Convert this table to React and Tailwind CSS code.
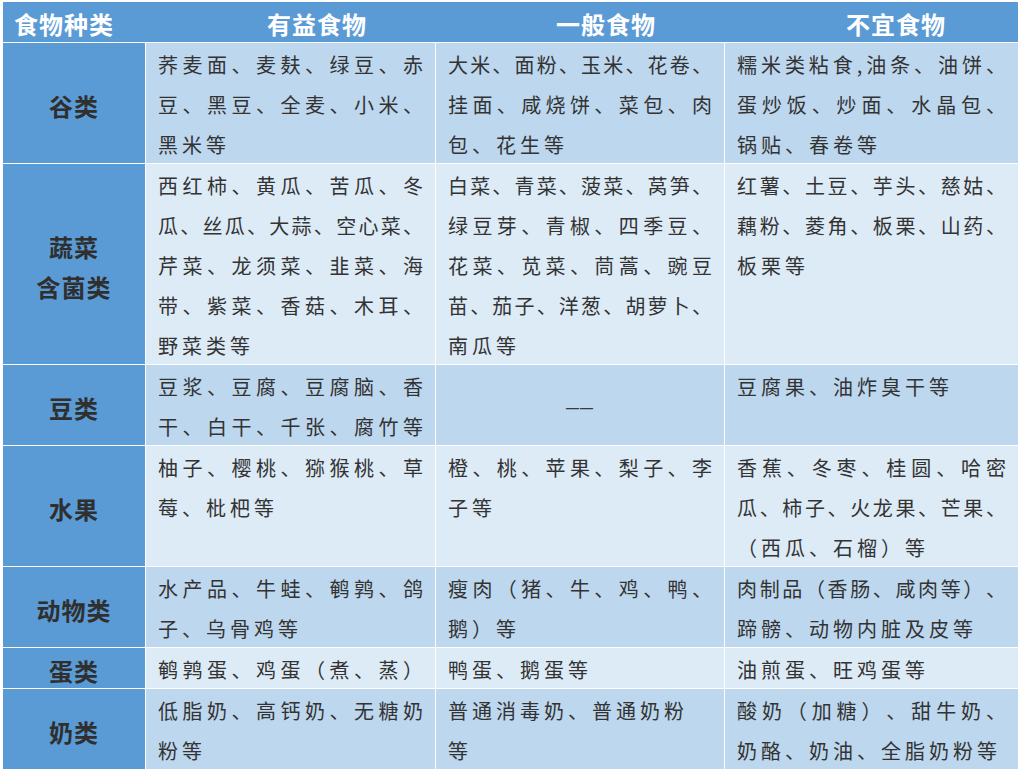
import React from 'react';

const FONT = '"Noto Sans CJK SC", "Noto Sans", sans-serif';

// each line: [text, justified?]
const ROWS = [
  {
    label: ['谷类'],
    tone: 'dark',
    h: 'h-[120px]',
    cells: [
      [['荞麦面、麦麸、绿豆、赤', 1], ['豆、黑豆、全麦、小米、', 1], ['黑米等', 0]],
      [['大米、面粉、玉米、花卷、', 1], ['挂面、咸烧饼、菜包、肉', 1], ['包、花生等', 0]],
      [['糯米类粘食,油条、油饼、', 1], ['蛋炒饭、炒面、水晶包、', 1], ['锅贴、春卷等', 0]],
    ],
  },
  {
    label: ['蔬菜', '含菌类'],
    tone: 'light',
    h: 'h-[200px]',
    cells: [
      [['西红柿、黄瓜、苦瓜、冬', 1], ['瓜、丝瓜、大蒜、空心菜、', 1], ['芹菜、龙须菜、韭菜、海', 1], ['带、紫菜、香菇、木耳、', 1], ['野菜类等', 0]],
      [['白菜、青菜、菠菜、莴笋、', 1], ['绿豆芽、青椒、四季豆、', 1], ['花菜、苋菜、茼蒿、豌豆', 1], ['苗、茄子、洋葱、胡萝卜、', 1], ['南瓜等', 0]],
      [['红薯、土豆、芋头、慈姑、', 1], ['藕粉、菱角、板栗、山药、', 1], ['板栗等', 0]],
    ],
  },
  {
    label: ['豆类'],
    tone: 'dark',
    h: 'h-[80px]',
    cells: [
      [['豆浆、豆腐、豆腐脑、香', 1], ['干、白干、千张、腐竹等', 1]],
      null,
      [['豆腐果、油炸臭干等', 0]],
    ],
  },
  {
    label: ['水果'],
    tone: 'light',
    h: 'h-[120px]',
    cells: [
      [['柚子、樱桃、猕猴桃、草', 1], ['莓、枇杷等', 0]],
      [['橙、桃、苹果、梨子、李', 1], ['子等', 0]],
      [['香蕉、冬枣、桂圆、哈密', 1], ['瓜、柿子、火龙果、芒果、', 1], ['（西瓜、石榴）等', 0]],
    ],
  },
  {
    label: ['动物类'],
    tone: 'dark',
    h: 'h-[80px]',
    cells: [
      [['水产品、牛蛙、鹌鹑、鸽', 1], ['子、乌骨鸡等', 0]],
      [['瘦肉（猪、牛、鸡、鸭、', 1], ['鹅）等', 0]],
      [['肉制品（香肠、咸肉等）、', 1], ['蹄髈、动物内脏及皮等', 0]],
    ],
  },
  {
    label: ['蛋类'],
    tone: 'light',
    h: 'h-[40px]',
    cells: [
      [['鹌鹑蛋、鸡蛋（煮、蒸）', 1]],
      [['鸭蛋、鹅蛋等', 0]],
      [['油煎蛋、旺鸡蛋等', 0]],
    ],
  },
  {
    label: ['奶类'],
    tone: 'dark',
    h: 'h-[80px]',
    cells: [
      [['低脂奶、高钙奶、无糖奶', 1], ['粉等', 0]],
      [['普通消毒奶、普通奶粉', 0], ['等', 0]],
      [['酸奶（加糖）、甜牛奶、', 1], ['奶酪、奶油、全脂奶粉等', 0]],
    ],
  },
];

function Line({ text, justify }) {
  if (justify) {
    return (
      <div className="flex justify-between h-[40px] leading-[40px]">
        {Array.from(text).map((ch, i) => (
          <span key={i}>{ch}</span>
        ))}
      </div>
    );
  }
  return (
    <div className="h-[40px] leading-[40px] tracking-[4px] whitespace-nowrap">{text}</div>
  );
}

function Cell({ lines, tone, h }) {
  const bg = tone === 'dark' ? 'bg-[#bdd7ee]' : 'bg-[#ddebf7]';
  if (!lines) {
    return (
      <div className={`${bg} ${h} flex items-center justify-center pt-[6px]`}>
        <span
          className="text-[13px] font-bold text-[#3a3a3a] tracking-[1px]"
          style={{ fontFamily: '"Liberation Sans", sans-serif' }}
        >
          ——
        </span>
      </div>
    );
  }
  return (
    <div className={`${bg} ${h} px-[12px] pt-[2px] text-[20px] text-[#333333] overflow-hidden`}>
      {lines.map(([t, j], i) => (
        <Line key={i} text={t} justify={!!j} />
      ))}
    </div>
  );
}

export default function App() {
  return (
    <div className="w-[1018px] h-[771px] bg-white pt-[2px] pl-[3px] overflow-hidden" style={{ fontFamily: FONT }}>
      <div className="flex flex-col gap-[1px] bg-white">
        {/* header */}
        <div className="grid grid-cols-[143px_290px_289px_1fr] h-[40px] bg-[#5b9bd5] text-white text-[24px] font-bold leading-[40px] tracking-[1px]">
          <div className="pl-[11px] pt-[2px] whitespace-nowrap">食物种类</div>
          <div className="pl-[121px] pt-[2px] whitespace-nowrap">有益食物</div>
          <div className="pl-[120px] pt-[2px] whitespace-nowrap">一般食物</div>
          <div className="pl-[121px] pt-[2px] whitespace-nowrap">不宜食物</div>
        </div>

        {/* body */}
        <div className="grid grid-cols-[142px_289px_288px_1fr] gap-[1px] bg-white">
          {ROWS.map((row, ri) => (
            <React.Fragment key={ri}>
              <div className={`${row.h} bg-[#5b9bd5] flex flex-col items-center justify-center pt-[6px] text-[24px] font-bold text-[#2f2f2f] leading-[40px] tracking-[1px]`}>
                {row.label.map((l, i) => (
                  <div key={i}>{l}</div>
                ))}
              </div>
              {row.cells.map((c, ci) => (
                <Cell key={ci} lines={c} tone={row.tone} h={row.h} />
              ))}
            </React.Fragment>
          ))}
        </div>
      </div>
    </div>
  );
}
